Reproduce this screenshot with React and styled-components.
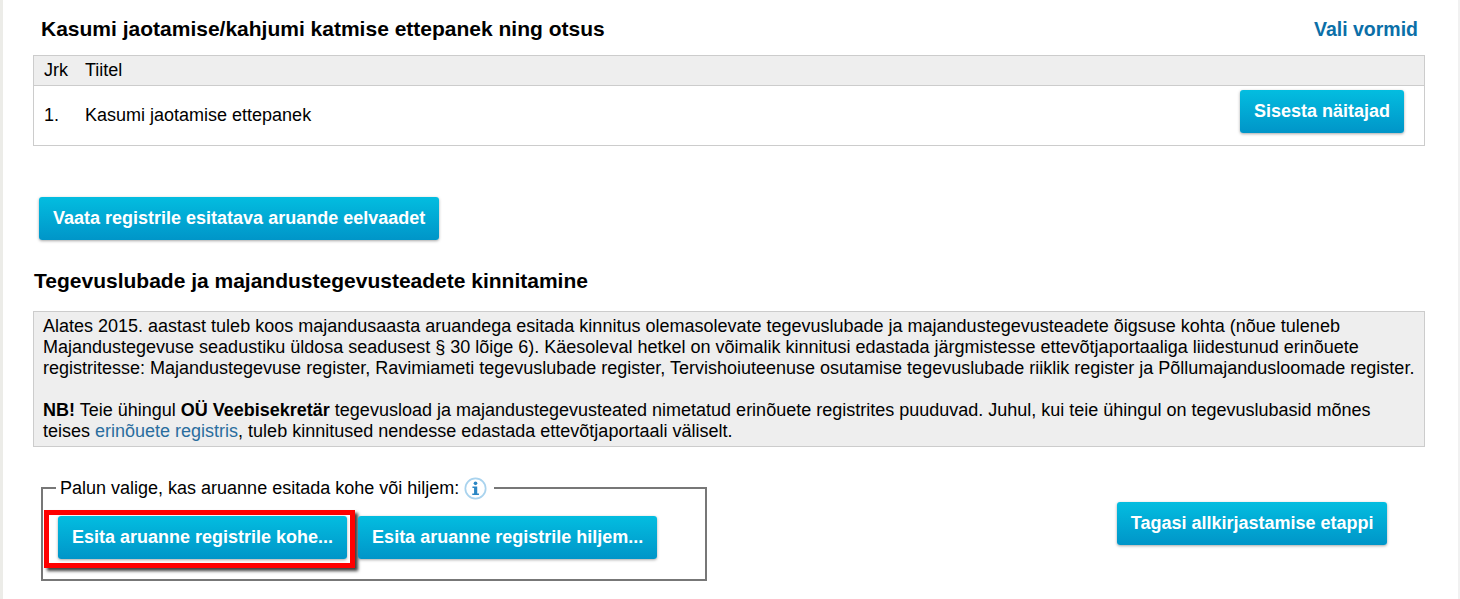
import React from 'react';
import styled, { createGlobalStyle } from 'styled-components';

const GlobalStyle = createGlobalStyle`
    html, body {
        margin: 0;
        padding: 0;
        background: #fff;
    }
    body {
        font-family: 'Liberation Sans', Arial, sans-serif;
        font-size: 16px;
        color: #000;
        overflow: hidden;
    }
`

function InfoIcon() {
    return (
        <svg width="23" height="23" viewBox="0 0 24 24">
            <circle cx="12" cy="12" r="10.6" fill="#fff" stroke="#a9d3ee" strokeWidth="1.8" />
            <circle cx="12" cy="6.6" r="1.9" fill="#2a86c4" />
            <path d="M8.8 10h5v7.2h1.8v1.6H8.6v-1.6h1.9v-5.6H8.8z" fill="#2a86c4" />
        </svg>
    )
}

function App() {
    return (
        <Page>
            <GlobalStyle />
            <TitleRow>
                <Title>Kasumi jaotamise/kahjumi katmise ettepanek ning otsus</Title>
                <SelectLink>Vali vormid</SelectLink>
            </TitleRow>
            <Table>
                <HeadRow>
                    <NumCell>Jrk</NumCell>
                    <span>Tiitel</span>
                </HeadRow>
                <BodyRow>
                    <NumCell>1.</NumCell>
                    <RowName>Kasumi jaotamise ettepanek</RowName>
                    <RowButton>Sisesta näitajad</RowButton>
                </BodyRow>
            </Table>
            <PreviewRow>
                <Button>Vaata registrile esitatava aruande eelvaadet</Button>
            </PreviewRow>
            <SubTitle>Tegevuslubade ja majandustegevusteadete kinnitamine</SubTitle>
            <Notice>
                Alates 2015. aastast tuleb koos majandusaasta aruandega esitada kinnitus olemasolevate tegevuslubade ja majandustegevusteadete õigsuse kohta (nõue tuleneb<br />
                Majandustegevuse seadustiku üldosa seadusest § 30 lõige 6). Käesoleval hetkel on võimalik kinnitusi edastada järgmistesse ettevõtjaportaaliga liidestunud erinõuete<br />
                registritesse: Majandustegevuse register, Ravimiameti tegevuslubade register, Tervishoiuteenuse osutamise tegevuslubade riiklik register ja Põllumajandusloomade register.<br />
                <br />
                <b>NB!</b> Teie ühingul <b>OÜ Veebisekretär</b> tegevusload ja majandustegevusteated nimetatud erinõuete registrites puuduvad. Juhul, kui teie ühingul on tegevuslubasid mõnes<br />
                teises <NoticeLink>erinõuete registris</NoticeLink>, tuleb kinnitused nendesse edastada ettevõtjaportaali väliselt.
            </Notice>
            <BottomRow>
                <Choice>
                    <ChoiceLegend>
                        Palun valige, kas aruanne esitada kohe või hiljem:
                        <InfoIcon />
                    </ChoiceLegend>
                    <ChoiceButtons>
                        <Highlight>
                            <Button>Esita aruanne registrile kohe...</Button>
                        </Highlight>
                        <LaterButton>Esita aruanne registrile hiljem...</LaterButton>
                    </ChoiceButtons>
                </Choice>
                <BackButton>Tagasi allkirjastamise etappi</BackButton>
            </BottomRow>
        </Page>
    )
}

const Page = styled.div`
    box-sizing: border-box;
    width: 1460px;
    height: 599px;
    padding: 0 33px 0 30px;
    overflow: hidden;
    border-left: 3px solid #ecece8;
    border-right: 2px solid #f1f1f1;
`

const TitleRow = styled.div`
    display: flex;
    justify-content: space-between;
    align-items: center;
    height: 55px;
    padding: 3px 7px 0 8px;
    box-sizing: border-box;
`

const Title = styled.div`
    font-size: 21px;
    font-weight: bold;
`

const SelectLink = styled.a`
    font-size: 19.5px;
    font-weight: bold;
    color: #0b6fa8;
    cursor: pointer;
`

const Table = styled.div`
    border: 1px solid #ccc;
`

const HeadRow = styled.div`
    display: flex;
    align-items: center;
    height: 29px;
    background: #eee;
    border-bottom: 1px solid #ccc;
    padding-left: 10px;
    font-size: 18px;
`

const BodyRow = styled.div`
    display: flex;
    align-items: center;
    height: 59px;
    padding: 0 20px 0 10px;
    font-size: 18px;
`

const NumCell = styled.span`
    width: 41px;
    flex: none;
    font-size: 18px;
`

const RowName = styled.span`
    flex: 1;
    font-size: 18px;
`

const Button = styled.button`
    height: 43px;
    padding: 0 14px;
    border: none;
    border-radius: 3px;
    background: linear-gradient(to bottom, #03bde0, #0095c8);
    box-shadow: 0 1px 3px rgba(0, 0, 0, 0.35);
    color: #fff;
    font-family: inherit;
    font-size: 18px;
    font-weight: bold;
    cursor: pointer;
    white-space: nowrap;
`

const RowButton = styled(Button)`
    align-self: flex-start;
    margin-top: 4px;
`

const LaterButton = styled(Button)`
    margin-top: 6px;
`

const BackButton = styled(Button)`
    margin-top: 26px;
    padding: 0 13.5px;
`

const PreviewRow = styled.div`
    padding: 51px 0 0 6px;
`

const SubTitle = styled.div`
    margin-top: 29px;
    padding-left: 1px;
    font-size: 21px;
    font-weight: bold;
    line-height: 24px;
`

const Notice = styled.div`
    margin-top: 18px;
    height: 136px;
    box-sizing: border-box;
    padding: 4px 9px;
    background: #eee;
    border: 1px solid #ccc;
    font-size: 18px;
    line-height: 21px;
    white-space: nowrap;
`

const NoticeLink = styled.a`
    color: #2a6d9e;
    cursor: pointer;
`

const BottomRow = styled.div`
    display: flex;
    align-items: flex-start;
    justify-content: space-between;
    margin-top: 29px;
    padding: 0 38px 0 8px;
`

const Choice = styled.fieldset`
    box-sizing: border-box;
    width: 666px;
    height: 105px;
    margin: 0;
    padding: 10px 0 0 1px;
    border: 2px solid #777;
`

const ChoiceLegend = styled.legend`
    display: flex;
    align-items: center;
    gap: 5px;
    margin-left: 12px;
    padding: 0 7px 0 4px;
    font-size: 18px;
    line-height: 24px;
`

const ChoiceButtons = styled.div`
    display: flex;
    align-items: flex-start;
    gap: 3px;
`

const Highlight = styled.div`
    display: flex;
    padding: 1px 3px 4px 9px;
    border: 5px solid #f00;
    box-shadow: 3px 3px 3px rgba(0, 0, 0, 0.75);
`

export default App
